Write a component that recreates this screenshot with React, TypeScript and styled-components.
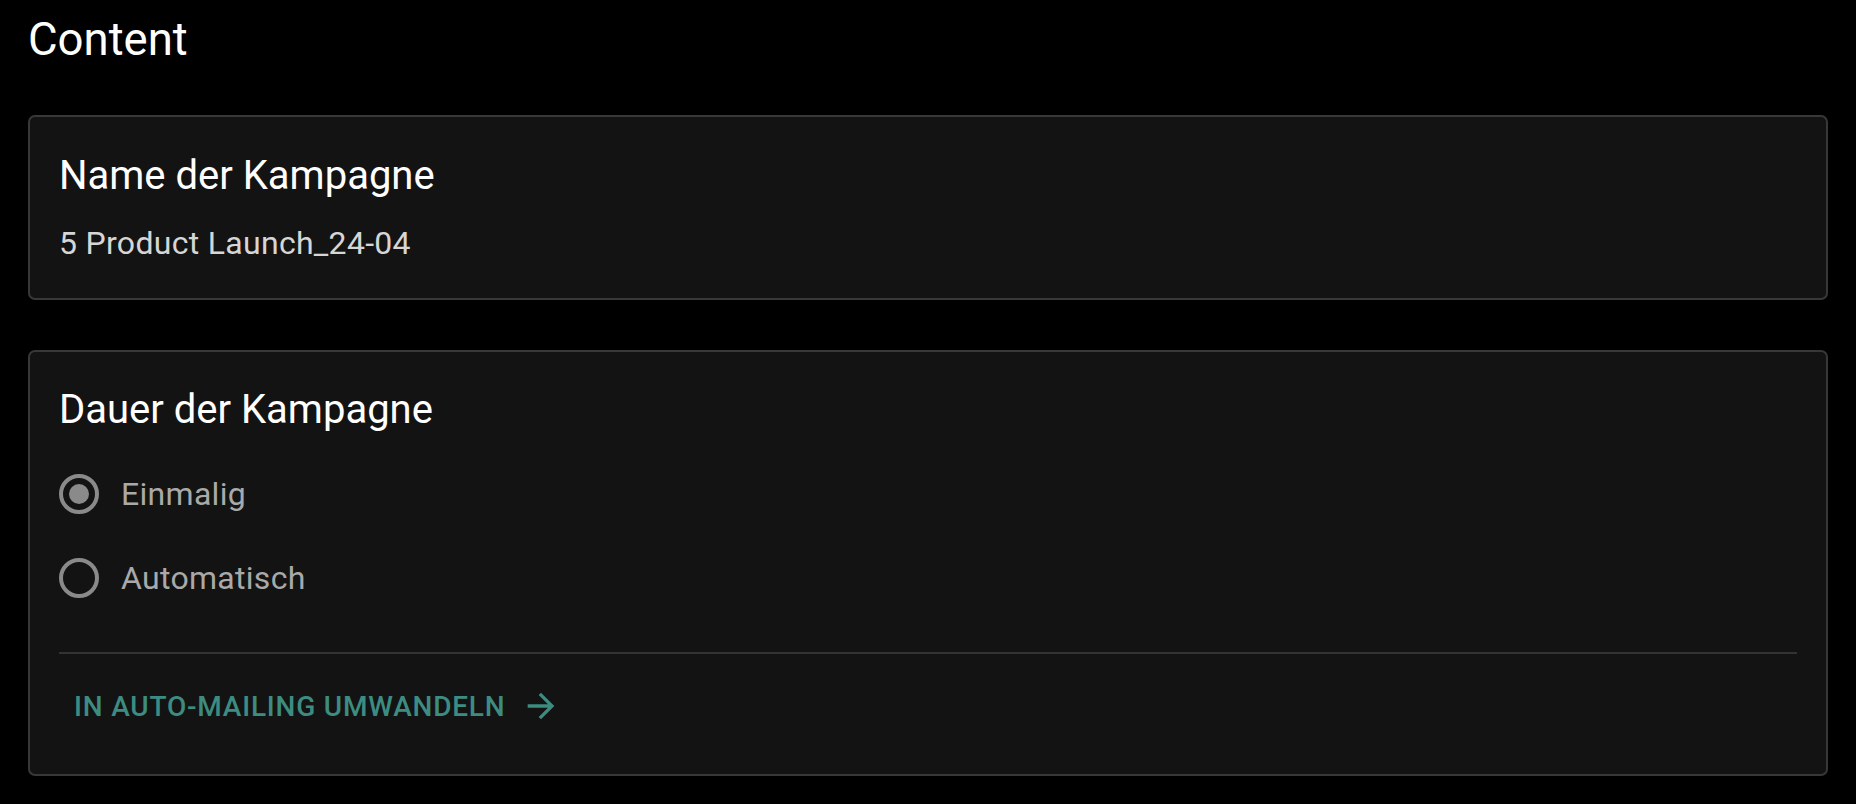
import React from "react";
import styled, { createGlobalStyle } from "styled-components";

const GlobalStyle = createGlobalStyle`
  html, body {
    margin: 0;
    padding: 0;
    background: #000;
  }
  body {
    font-family: Roboto, "Liberation Sans", Arial, sans-serif;
    -webkit-font-smoothing: antialiased;
  }
`;

const Page = styled.main`
  padding: 14px 28px 28px;
  background: #000;
  min-height: 100vh;
  box-sizing: border-box;
`;

const Heading = styled.h1`
  margin: 0 0 49px;
  font-size: 45.5px;
  line-height: 52px;
  font-weight: 400;
  color: #fff;
`;

const Stack = styled.div`
  display: flex;
  flex-direction: column;
  gap: 50px;
`;

const Card = styled.section<{ $pb: number }>`
  background: #131313;
  border: 2px solid #383838;
  border-radius: 7px;
  padding: 35px 29px ${(p) => p.$pb}px;
  display: flex;
  flex-direction: column;
`;

const CardTitle = styled.h2<{ $mt?: number }>`
  margin: ${(p) => (p.$mt ? `-${p.$mt}px` : "0")} 0 0;
  font-size: 40px;
  line-height: 48px;
  font-weight: 400;
  color: #fff;
`;

const Value = styled.p`
  margin: 23px 0 0;
  font-size: 32px;
  line-height: 40px;
  letter-spacing: 0.3px;
  color: #d6d6d6;
`;

const RadioGroup = styled.div`
  margin-top: 18px;
  display: flex;
  flex-direction: column;
`;

const RadioRow = styled.label`
  display: flex;
  align-items: center;
  height: 84px;
  cursor: pointer;
`;

const RadioCircle = styled.span<{ $checked: boolean }>`
  box-sizing: border-box;
  width: 40px;
  height: 40px;
  border-radius: 50%;
  border: 4px solid #8a8a8a;
  margin-right: 22px;
  display: flex;
  align-items: center;
  justify-content: center;
  flex-shrink: 0;

  &::after {
    content: "";
    width: 20px;
    height: 20px;
    border-radius: 50%;
    background: #8a8a8a;
    display: ${(p) => (p.$checked ? "block" : "none")};
  }
`;

const RadioLabel = styled.span`
  font-size: 32px;
  line-height: 40px;
  letter-spacing: 0.3px;
  color: #a9a9a9;
`;

const Divider = styled.hr`
  margin: 32px 0 0;
  border: none;
  height: 2px;
  background: #333;
`;

const ActionButton = styled.button`
  margin-top: 24px;
  align-self: flex-start;
  height: 56px;
  padding: 0 15px;
  display: inline-flex;
  align-items: center;
  background: transparent;
  border: none;
  border-radius: 7px;
  font-family: Roboto, "Liberation Sans", Arial, sans-serif;
  font-size: 28px;
  font-weight: 500;
  letter-spacing: 0.8px;
  text-transform: uppercase;
  color: #3d8c81;
  cursor: pointer;
`;

const ArrowIcon = styled.svg`
  width: 40px;
  height: 40px;
  margin-left: 16px;
  fill: currentColor;
  flex-shrink: 0;
`;

const options = [
  { label: "Einmalig", checked: true },
  { label: "Automatisch", checked: false },
];

export default function App() {
  return (
    <>
      <GlobalStyle />
      <Page>
        <Heading>Content</Heading>
        <Stack>
          <Card $pb={35}>
            <CardTitle>Name der Kampagne</CardTitle>
            <Value>5 Product Launch_24-04</Value>
          </Card>
          <Card $pb={40}>
            <CardTitle $mt={1}>Dauer der Kampagne</CardTitle>
            <RadioGroup>
              {options.map((o) => (
                <RadioRow key={o.label}>
                  <RadioCircle $checked={o.checked} />
                  <RadioLabel>{o.label}</RadioLabel>
                </RadioRow>
              ))}
            </RadioGroup>
            <Divider />
            <ActionButton>
              In Auto-Mailing umwandeln
              <ArrowIcon viewBox="0 0 24 24">
                <path d="M12 4l-1.41 1.41L16.17 11H4v2h12.17l-5.58 5.59L12 20l8-8z" />
              </ArrowIcon>
            </ActionButton>
          </Card>
        </Stack>
      </Page>
    </>
  );
}
